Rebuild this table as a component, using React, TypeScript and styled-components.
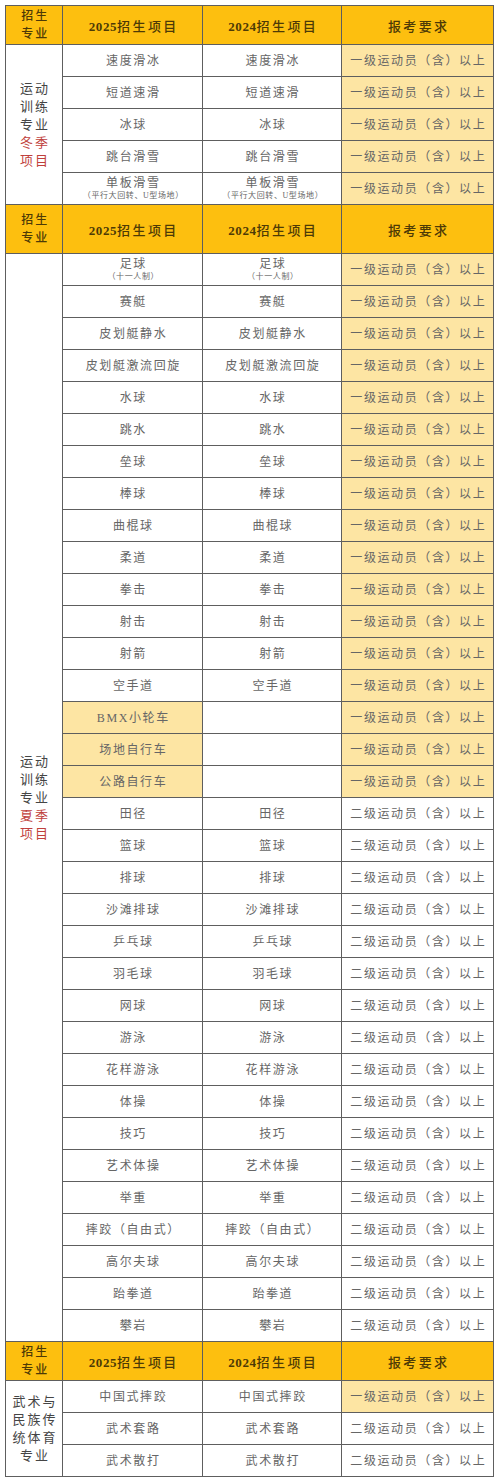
import React from 'react';
import styled, { createGlobalStyle } from 'styled-components';

const Global = createGlobalStyle`
  html, body { margin: 0; padding: 0; background: #ffffff; }
  body { font-family: "Liberation Serif", "Noto Sans CJK SC", serif; }
`;

const Page = styled.div`
  padding: 5px 0 6px 5px;
`;

const Sheet = styled.div`
  box-sizing: border-box;
  width: 489px;
  display: grid;
  grid-template-columns: 56px 139px 138px 151px;
  grid-auto-rows: auto;
  gap: 1px;
  padding: 1px;
  background: #5e5e5e;
`;

const HeadCell = styled.div<{ $h: number }>`
  height: ${(p) => p.$h}px;
  background: #fdbf0f;
  color: #4d3a06;
  font-weight: 500;
  font-size: 13px;
  letter-spacing: 2.4px;
  padding-left: 2.4px;
  display: flex;
  flex-direction: column;
  align-items: center;
  justify-content: center;
`;

const Year = styled.span`
  font-weight: 700;
  letter-spacing: 0.6px;
`;

const HeadStack = styled.div`
  font-size: 12px;
  line-height: 18px;
  letter-spacing: 2px;
  text-align: center;
`;

const LabelCell = styled.div<{ $span: number }>`
  grid-row: span ${(p) => p.$span};
  background: #ffffff;
  display: flex;
  flex-direction: column;
  align-items: center;
  justify-content: center;
  font-size: 13px;
  line-height: 18px;
  letter-spacing: 2px;
  padding-left: 2px;
`;

const LabelLine = styled.div<{ $red?: boolean }>`
  color: ${(p) => (p.$red ? '#bf3f3c' : '#454545')};
`;

const Cell = styled.div<{ $hl?: boolean }>`
  height: 31px;
  background: ${(p) => (p.$hl ? '#fde5a3' : '#ffffff')};
  color: #666666;
  display: flex;
  flex-direction: column;
  align-items: center;
  justify-content: center;
  font-size: 12px;
  letter-spacing: 1.6px;
  padding-left: 1.6px;
`;

const Main = styled.div`
  line-height: 14px;
`;

const Sub = styled.div`
  font-size: 8px;
  line-height: 11px;
  letter-spacing: 0.6px;
`;

type Row = {
  a: string;
  b: string;
  sub?: string;
  lvl: 1 | 2;
  hlA?: boolean;
};

type Section = {
  head: number;
  label: { text: string; red?: boolean }[];
  rows: Row[];
};

const same = (names: string[], lvl: 1 | 2): Row[] =>
  names.map((n) => ({ a: n, b: n, lvl }));

const sections: Section[] = [
  {
    head: 38,
    label: [
      { text: '运动' },
      { text: '训练' },
      { text: '专业' },
      { text: '冬季', red: true },
      { text: '项目', red: true },
    ],
    rows: [
      ...same(['速度滑冰', '短道速滑', '冰球', '跳台滑雪'], 1),
      { a: '单板滑雪', b: '单板滑雪', sub: '（平行大回转、U型场地）', lvl: 1 },
    ],
  },
  {
    head: 48,
    label: [
      { text: '运动' },
      { text: '训练' },
      { text: '专业' },
      { text: '夏季', red: true },
      { text: '项目', red: true },
    ],
    rows: [
      { a: '足球', b: '足球', sub: '（十一人制）', lvl: 1 },
      ...same(
        ['赛艇', '皮划艇静水', '皮划艇激流回旋', '水球', '跳水', '垒球', '棒球', '曲棍球', '柔道', '拳击', '射击', '射箭', '空手道'],
        1
      ),
      { a: 'BMX小轮车', b: '', lvl: 1, hlA: true },
      { a: '场地自行车', b: '', lvl: 1, hlA: true },
      { a: '公路自行车', b: '', lvl: 1, hlA: true },
      ...same(
        ['田径', '篮球', '排球', '沙滩排球', '乒乓球', '羽毛球', '网球', '游泳', '花样游泳', '体操', '技巧', '艺术体操', '举重', '摔跤（自由式）', '高尔夫球', '跆拳道', '攀岩'],
        2
      ),
    ],
  },
  {
    head: 38,
    label: [{ text: '武术与' }, { text: '民族传' }, { text: '统体育' }, { text: '专业' }],
    rows: [
      { a: '中国式摔跤', b: '中国式摔跤', lvl: 1 },
      ...same(['武术套路', '武术散打'], 2),
    ],
  },
];

const Item = ({ text, sub, hl }: { text: string; sub?: string; hl?: boolean }) => (
  <Cell $hl={hl}>
    <Main>{text}</Main>
    {sub && <Sub>{sub}</Sub>}
  </Cell>
);

export default function App() {
  return (
    <Page>
      <Global />
      <Sheet>
        {sections.map((s, si) => (
          <React.Fragment key={si}>
            <HeadCell $h={s.head}>
              <HeadStack>
                <div>招生</div>
                <div>专业</div>
              </HeadStack>
            </HeadCell>
            <HeadCell $h={s.head}>
              <div>
                <Year>2025</Year>招生项目
              </div>
            </HeadCell>
            <HeadCell $h={s.head}>
              <div>
                <Year>2024</Year>招生项目
              </div>
            </HeadCell>
            <HeadCell $h={s.head}>报考要求</HeadCell>
            <LabelCell $span={s.rows.length}>
              {s.label.map((l, li) => (
                <LabelLine key={li} $red={l.red}>
                  {l.text}
                </LabelLine>
              ))}
            </LabelCell>
            {s.rows.map((r, ri) => (
              <React.Fragment key={ri}>
                <Item text={r.a} sub={r.sub} hl={r.hlA} />
                <Item text={r.b} sub={r.b ? r.sub : undefined} />
                <Item
                  text={r.lvl === 1 ? '一级运动员（含）以上' : '二级运动员（含）以上'}
                  hl={r.lvl === 1}
                />
              </React.Fragment>
            ))}
          </React.Fragment>
        ))}
      </Sheet>
    </Page>
  );
}
